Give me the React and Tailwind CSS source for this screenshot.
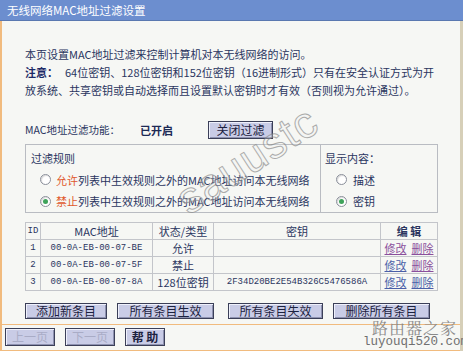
import React from "react";

const FONT = "font-['SimSun','Noto_Sans_CJK_SC',sans-serif]";

/* radio dot */
function Radio({ checked }) {
  return (
    <span className="inline-flex size-[11px] shrink-0 items-center justify-center rounded-full border border-[#8a8f9a] bg-white shadow-[inset_1px_1px_1px_rgba(0,0,0,0.15)]">
      {checked && <span className="size-[5px] rounded-full bg-[#3fa35a]" />}
    </span>
  );
}

function Btn({ children, className = "", disabled }) {
  return (
    <div
      className={
        "flex items-center justify-center whitespace-nowrap border border-[#3b3f58] bg-[#c9cce6] text-[12px] shadow-[inset_1px_1px_0_#eef0fb,inset_-1px_-1px_0_#8e92b0] " +
        (disabled ? "text-[#a9acc6] " : "text-[#1c2240] ") +
        className
      }
    >
      {children}
    </div>
  );
}

const rows = [
  { id: 1, mac: "00-0A-EB-00-07-BE", type: "允许", key: "", v1: true },
  { id: 2, mac: "00-0A-EB-00-07-5F", type: "禁止", key: "", v1: false },
  { id: 3, mac: "00-0A-EB-00-07-8A", type: "128位密钥", key: "2F34D20BE2E54B326C5476586A", v1: false },
];

export default function App() {
  return (
    <div className={`relative h-[351px] w-[463px] overflow-hidden bg-[#f6f7f4] ${FONT} text-[11px] text-[#2a355f]`}>
      {/* Title */}
      <div className="h-[21px] border-b border-[#5a78b0] bg-[#6c8ecf] pl-[7px] text-[11.5px] leading-[21px] text-white">
        无线网络MAC地址过滤设置
      </div>

      <div className="flex h-[330px] flex-col border-l-2 border-r-[3px] border-l-[#f1bb7e] border-r-[#d6cfb8]">
        {/* Intro */}
        <div className="pl-[23px] pt-[24px] leading-[18px]">
          <p className="whitespace-nowrap">本页设置MAC地址过滤来控制计算机对本无线网络的访问。</p>
          <p className="whitespace-nowrap">
            <b className="text-[#1d2a66]">注意：</b>
            <span className="ml-[7px]">64位密钥、128位密钥和152位密钥（16进制形式）只有在安全认证方式为开</span>
          </p>
          <p className="whitespace-nowrap">放系统、共享密钥或自动选择而且设置默认密钥时才有效（否则视为允许通过）。</p>
        </div>

        {/* Filter state */}
        <div className="mt-[22px] flex items-center pl-[23px]">
          <span className="w-[115px] text-[10.5px]">MAC地址过滤功能：</span>
          <b className="w-[68px] text-[11px] text-[#1d2a55]">已开启</b>
          <Btn className="h-[18px] w-[65px]">关闭过滤</Btn>
        </div>

        {/* Rules box */}
        <div className="ml-[23px] mt-[5px] flex h-[69px] w-[413px] border border-[#b9bcc2]">
          <div className="flex w-[295px] flex-col gap-[5px] border-r border-[#b9bcc2] pl-[5px] pt-[5px]">
            <span>过滤规则</span>
            <div className="flex items-center gap-[5px] pl-[9px]">
              <Radio />
              <span className="whitespace-nowrap">
                <span className="text-[#e0582c]">允许</span>列表中生效规则之外的MAC地址访问本无线网络
              </span>
            </div>
            <div className="flex items-center gap-[5px] pl-[9px]">
              <Radio checked />
              <span className="whitespace-nowrap">
                <span className="text-[#e0582c]">禁止</span>列表中生效规则之外的MAC地址访问本无线网络
              </span>
            </div>
          </div>
          <div className="flex flex-col gap-[5px] pl-[4px] pt-[5px]">
            <span>显示内容：</span>
            <div className="flex items-center gap-[6px] pl-[11px]">
              <Radio />
              <span>描述</span>
            </div>
            <div className="flex items-center gap-[6px] pl-[11px]">
              <Radio checked />
              <span>密钥</span>
            </div>
          </div>
        </div>

        {/* Table */}
        <table className="ml-[23px] mt-[9px] w-[413px] border-collapse text-center leading-[15px]">
          <thead>
            <tr className="h-[17px]">
              <th className="w-[15px] border border-[#c3c5ca] font-['Liberation_Mono',monospace] text-[9px] font-normal">ID</th>
              <th className="w-[112px] border border-[#c3c5ca] font-normal">MAC地址</th>
              <th className="w-[61px] border border-[#c3c5ca] font-normal">状态/类型</th>
              <th className="w-[167px] border border-[#c3c5ca] font-normal">密钥</th>
              <th className="border border-[#c3c5ca] font-bold">编 辑</th>
            </tr>
          </thead>
          <tbody>
            {rows.map((r) => (
              <tr key={r.id} className="h-[17px]">
                <td className="border border-[#c3c5ca] font-['Liberation_Mono',monospace] text-[9px]">{r.id}</td>
                <td className="border border-[#c3c5ca] font-['Liberation_Mono',monospace] text-[9px]">{r.mac}</td>
                <td className="border border-[#c3c5ca]">{r.type}</td>
                <td className="border border-[#c3c5ca] font-['Liberation_Mono',monospace] text-[9px]">{r.key}</td>
                <td className="whitespace-nowrap border border-[#c3c5ca]">
                  <span className={"underline " + (r.v1 ? "text-[#8a4f9c]" : "text-[#4a5fa8]")}>修改</span>
                  <span className={"ml-[5px] underline " + (r.id === 3 ? "text-[#4a5fa8]" : "text-[#8a4f9c]")}>删除</span>
                </td>
              </tr>
            ))}
          </tbody>
        </table>

        {/* Action buttons */}
        <div className="mt-[12px] flex gap-[10px] pl-[23px]">
          <Btn className="h-[16px] w-[82px]">添加新条目</Btn>
          <Btn className="h-[16px] w-[97px]">所有条目生效</Btn>
          <Btn className="ml-[4px] h-[16px] w-[95px]">所有条目失效</Btn>
          <Btn className="h-[16px] w-[97px]">删除所有条目</Btn>
        </div>

        {/* Footer */}
        <div className="mt-[5px] flex flex-1 gap-[10px] border-y border-[#f1bb7e] pl-[3px] pt-[3px]">
          <Btn disabled className="h-[18px] w-[50px]">上一页</Btn>
          <Btn disabled className="h-[18px] w-[50px]">下一页</Btn>
          <Btn className="h-[18px] w-[40px] font-bold">帮 助</Btn>
        </div>
      </div>

      {/* watermarks */}
      <div className="pointer-events-none absolute left-[247px] top-[160px] -translate-x-1/2 -translate-y-1/2 -rotate-[33deg] font-['Liberation_Sans',sans-serif] text-[44px] leading-none tracking-[1px] text-[#f2f2f2]/40 opacity-70 [-webkit-text-stroke:1px_#8c8c8c]">
        sauustc
      </div>
      <div className="pointer-events-none absolute left-[372px] top-[320px] font-['Noto_Serif_CJK_SC','Noto_Sans_CJK_SC',serif] text-[16px] leading-none tracking-[1px] text-[#8a8a8a]">
        路由器之家
      </div>
      <div className="pointer-events-none absolute left-[363px] top-[336px] font-['Liberation_Mono',monospace] text-[12.5px] leading-none text-[#707070]">
        luyouqi520.com
      </div>
    </div>
  );
}
